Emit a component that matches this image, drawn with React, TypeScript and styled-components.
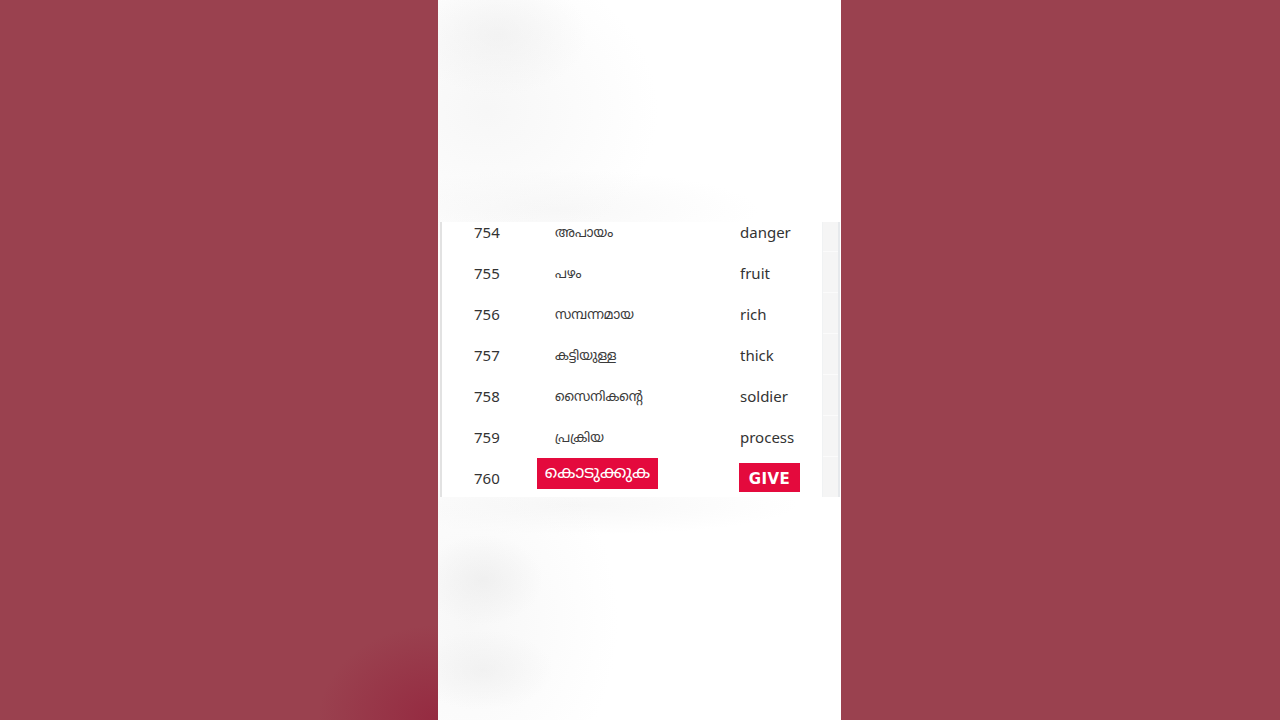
import React from "react";
import styled, { createGlobalStyle } from "styled-components";

const Global = createGlobalStyle`
  html, body { margin: 0; padding: 0; }
  body {
    width: 1280px;
    height: 720px;
    overflow: hidden;
    font-family: "Noto Sans", "Open Sans", sans-serif;
    background:
      radial-gradient(ellipse 120px 95px at 438px 720px, rgba(148,38,62,0.85), rgba(148,38,62,0) 100%),
      #9a414f;
  }
`;

const Page = styled.div`
  display: flex;
  width: 1280px;
  height: 720px;
  padding-left: 438px;
  box-sizing: border-box;
`;

const Panel = styled.div`
  width: 403px;
  height: 720px;
  box-sizing: border-box;
  padding-top: 222px;
  background:
    radial-gradient(ellipse 90px 60px at 60px 35px, rgba(232,232,232,0.45), rgba(240,240,240,0) 100%),
    radial-gradient(ellipse 170px 150px at 50px 110px, rgba(240,240,240,0.55), rgba(245,245,245,0) 100%),
    radial-gradient(ellipse 200px 40px at 120px 210px, rgba(243,243,243,0.6), rgba(245,245,245,0) 100%),
    radial-gradient(ellipse 60px 45px at 45px 580px, rgba(232,232,232,0.55), rgba(240,240,240,0) 100%),
    radial-gradient(ellipse 70px 40px at 45px 670px, rgba(235,235,235,0.55), rgba(240,240,240,0) 100%),
    radial-gradient(ellipse 150px 190px at 30px 620px, rgba(242,242,242,0.6), rgba(245,245,245,0) 100%),
    radial-gradient(ellipse 220px 30px at 140px 505px, rgba(242,242,242,0.6), rgba(245,245,245,0) 100%),
    #ffffff;
`;

const TableWindow = styled.div`
  display: flex;
  height: 275px;
  margin-left: 2px;
  margin-right: 1px;
  overflow: hidden;
  border-left: 2px solid #e2e2e2;
  border-right: 2px solid #e6e9ec;
  background: #fff;
`;

const Rows = styled.div`
  flex: 1;
  margin-top: -11px;
`;

const Row = styled.div`
  display: grid;
  grid-template-columns: 81px 185px 1fr;
  height: 41px;
  padding-left: 32px;
  color: #333333;
`;

const Cell = styled.div`
  display: flex;
  align-items: center;
  height: 41px;
  font-size: 15px;
`;

const Ml = styled(Cell)`
  font-family: "Noto Sans Malayalam", "Noto Sans", sans-serif;
  font-size: 13.3px;
  padding-top: 4px;
  box-sizing: border-box;
  color: #3a3a3a;
`;

const Badge = styled.span<{ $w: number; $h: number; $dx: number; $top: number }>`
  align-self: flex-start;
  display: flex;
  align-items: center;
  justify-content: center;
  width: ${(p) => p.$w}px;
  height: ${(p) => p.$h}px;
  margin-left: ${(p) => p.$dx}px;
  margin-top: ${(p) => p.$top}px;
  background: #e40a3d;
  color: #fff;
  box-sizing: border-box;
`;

const MlBadge = styled(Badge)`
  font-family: "Noto Sans Malayalam", "Noto Sans", sans-serif;
  font-size: 17.5px;
  font-weight: 400;
`;

const EnBadge = styled(Badge)`
  font-family: "DejaVu Sans", sans-serif;
  font-weight: 900;
  font-size: 15px;
  letter-spacing: 0.4px;
  padding-top: 3px;
`;

const Rail = styled.div`
  width: 15px;
  margin-top: -11px;
  background: #f5f5f5;
  border-left: 1px solid #f0f2f3;
`;

const RailCell = styled.div`
  height: 40px;
  border-bottom: 1px solid #fbfbfb;
`;

const words: [string, string, string][] = [
  ["754", "അപായം", "danger"],
  ["755", "പഴം", "fruit"],
  ["756", "സമ്പന്നമായ", "rich"],
  ["757", "കട്ടിയുള്ള", "thick"],
  ["758", "സൈനികന്റെ", "soldier"],
  ["759", "പ്രക്രിയ", "process"],
];

export default function App() {
  return (
    <>
      <Global />
      <Page>
        <Panel>
          <TableWindow>
            <Rows>
              {words.map(([n, m, e]) => (
                <Row key={n}>
                  <Cell>{n}</Cell>
                  <Ml>{m}</Ml>
                  <Cell>{e}</Cell>
                </Row>
              ))}
              <Row>
                <Cell>760</Cell>
                <Cell>
                  <MlBadge $w={121} $h={31} $dx={-18} $top={1}>
                    കൊടുക്കുക
                  </MlBadge>
                </Cell>
                <Cell>
                  <EnBadge $w={61} $h={29} $dx={-1} $top={6}>
                    GIVE
                  </EnBadge>
                </Cell>
              </Row>
            </Rows>
            <Rail>
              {Array.from({ length: 7 }).map((_, i) => (
                <RailCell key={i} />
              ))}
            </Rail>
          </TableWindow>
        </Panel>
      </Page>
    </>
  );
}
